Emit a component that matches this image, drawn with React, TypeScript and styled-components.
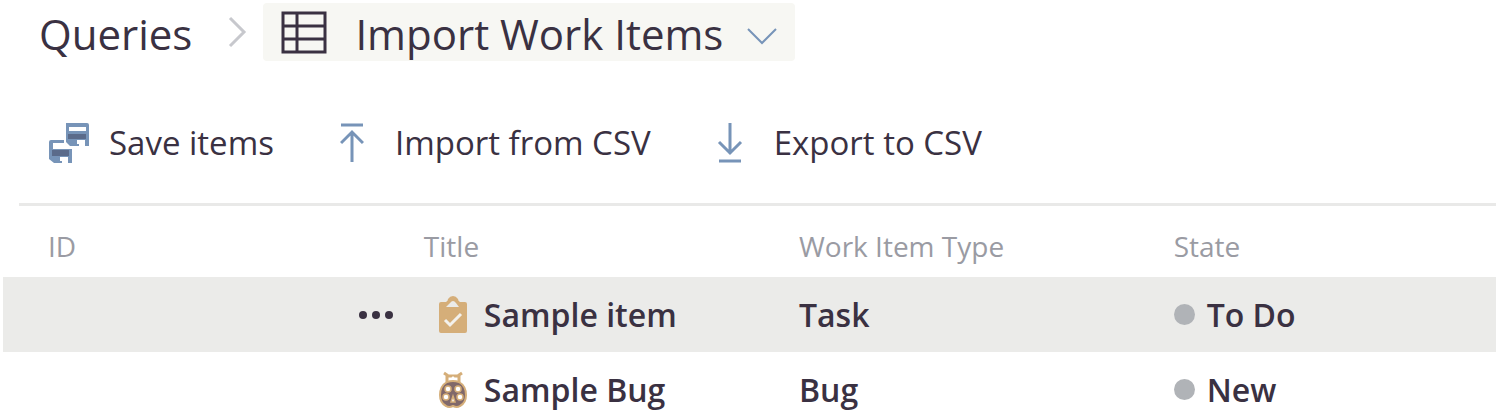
import React from "react";
import styled, { createGlobalStyle } from "styled-components";

const INK = "#3a3142";
const BLUE = "#7794b8";
const SAND = "#d5ae79";

const GlobalStyle = createGlobalStyle`
  *, *::before, *::after { box-sizing: border-box; }
  body {
    margin: 0;
    overflow: hidden;
    background: #fff;
    color: ${INK};
    font-family: "Open Sans", "Noto Sans", sans-serif;
  }
  svg { display: block; flex: none; }
`;

const Page = styled.main`
  padding: 3px 5px 0 3px;
`;

const Breadcrumb = styled.nav`
  display: flex;
  align-items: center;
  height: 58px;
  padding-left: 36px;
  font-size: 42px;
  line-height: 58px;
  white-space: nowrap;
`;

const Crumb = styled.a`
  padding-top: 4px;
  color: inherit;
  text-decoration: none;
`;

const CrumbArrow = styled.svg`
  margin: 0 15px 0 36px;
`;

const QueryButton = styled.button`
  display: flex;
  align-items: center;
  height: 58px;
  padding: 0 18px 0 17px;
  border: 0;
  border-radius: 4px;
  background: #f7f7f3;
  color: inherit;
  font: inherit;
  line-height: 58px;
`;

const QueryName = styled.span`
  padding-top: 4px;
  margin: 0 24px 0 28px;
`;

const MenuChevron = styled.svg`
  margin-top: 8px;
`;

const Toolbar = styled.div`
  display: flex;
  align-items: center;
  gap: 66px;
  height: 145px;
  margin-left: 16px;
  padding: 22px 0 0 29px;
  border-bottom: 3px solid #e9e9e8;
`;

const ToolButton = styled.button<{ $gap: number }>`
  display: flex;
  align-items: center;
  gap: ${({ $gap }) => $gap}px;
  padding: 0;
  border: 0;
  background: none;
  color: inherit;
  font: inherit;
  font-size: 33px;
  line-height: 44px;
  white-space: nowrap;
`;

const Table = styled.table`
  width: 100%;
  border-collapse: collapse;
  table-layout: fixed;
  text-align: left;
`;

const Column = styled.col<{ $width: string }>`
  width: ${({ $width }) => $width};
`;

const HeadCell = styled.th<{ $indent?: number }>`
  height: 71px;
  padding: 8px 0 0 ${({ $indent = 45 }) => $indent}px;
  color: #9a9ba3;
  font-size: 28px;
  font-weight: 400;
  line-height: 36px;
`;

const Row = styled.tr<{ $selected?: boolean }>`
  background: ${({ $selected }) => ($selected ? "#ebebe9" : "transparent")};
`;

const Cell = styled.td<{ $indent?: number }>`
  height: 75px;
  padding: 0 0 0 ${({ $indent = 45 }) => $indent}px;
  font-size: 32px;
  font-weight: 600;
  line-height: 44px;
  white-space: nowrap;
`;

const TitleContent = styled.div`
  display: flex;
  align-items: center;
  gap: 17px;
`;

const MoreSlot = styled.div`
  width: 64px;
`;

const MoreButton = styled.button`
  display: block;
  padding: 8px 0;
  border: 0;
  background: none;
`;

const StateContent = styled.div`
  display: flex;
  align-items: center;
  gap: 12px;
`;

const StateDot = styled.span`
  width: 21px;
  height: 21px;
  border-radius: 50%;
  background: #b0b3b7;
`;

const GridIcon = () => (
  <svg width="47" height="43" viewBox="0 0 47 43" fill="none" stroke={INK} strokeWidth="3" aria-hidden="true">
    <rect x="3" y="2" width="42" height="39" />
    <path d="M3 15H45M3 28H45" />
    <path d="M17 2V41" />
  </svg>
);

const SaveAllIcon = () => (
  <svg width="42" height="42" viewBox="0 0 42 42" aria-hidden="true">
    <path
      fill={BLUE}
      fillRule="evenodd"
      d="M18 1H39Q41 1 41 3V24H37V18H29V24H22L18 20ZM21 5V9H38V5Z"
    />
    <path fill="#5b6b8a" d="M20 12H38V17H20Z" />
    <path fill={BLUE} d="M3 18H16V21H5V27H24V41H20V35H12V41H6L1 37V20Q1 18 3 18Z" />
    <path fill="#5b6b8a" d="M4 28H21V34H4Z" />
    <path fill={BLUE} d="M27 22H31V24H27ZM10 39H14V41H10Z" />
  </svg>
);

const UploadIcon = () => (
  <svg width="24" height="42" viewBox="0 0 24 42" fill="none" stroke={BLUE} strokeWidth="3" aria-hidden="true">
    <path d="M1 3H23M12 40V11M1 21L12 10L23 21" />
  </svg>
);

const DownloadIcon = () => (
  <svg width="26" height="42" viewBox="0 0 26 42" fill="none" stroke={BLUE} strokeWidth="3" aria-hidden="true">
    <path d="M2 39H24M13 1V31M2 20L13 31L24 20" />
  </svg>
);

const TaskIcon = () => (
  <svg width="28" height="38" viewBox="0 0 28 38" aria-hidden="true">
    <path
      fill={SAND}
      fillRule="evenodd"
      d="M2 6H7Q9 5 9 3Q11 0 14 0Q17 0 19 3Q19 5 21 6H26Q28 6 28 8V35Q28 37 26 37H2Q0 37 0 35V8Q0 6 2 6ZM7 11H20L17 7Q14 3 11 7Z"
    />
    <path d="M6 24L11 29L22 18" fill="none" stroke="#f3f1ec" strokeWidth="3" />
  </svg>
);

const BugIcon = () => (
  <svg width="28" height="38" viewBox="0 0 28 38" aria-hidden="true">
    <path d="M5 2L8 4V11M23 2L20 4V11M8 5H20" fill="none" stroke={SAND} strokeWidth="3" />
    <path d="M10 10L14 5L18 10Z" fill="#fff" />
    <path
      d="M8 11Q14 9 20 11Q27 15 27 24Q27 32 21 35Q18 37 14 35Q10 37 7 35Q1 32 1 24Q1 15 8 11Z"
      fill="#80686a"
      stroke={SAND}
      strokeWidth="2"
    />
    <g fill="#fff" stroke={SAND} strokeWidth="1.5">
      <circle cx="9" cy="18" r="3" />
      <circle cx="19" cy="18" r="3" />
      <circle cx="7" cy="26" r="3" />
      <circle cx="21" cy="26" r="3" />
      <path d="M14 25L16 31H12Z" />
    </g>
  </svg>
);

const MoreIcon = () => (
  <svg width="36" height="10" viewBox="0 0 36 10" fill={INK} aria-hidden="true">
    <circle cx="5" cy="5" r="4" />
    <circle cx="18" cy="5" r="4" />
    <circle cx="31" cy="5" r="4" />
  </svg>
);

type Item = { title: string; type: "Task" | "Bug"; state: string; selected?: boolean };

const items: Item[] = [
  { title: "Sample item", type: "Task", state: "To Do", selected: true },
  { title: "Sample Bug", type: "Bug", state: "New" },
];

export default function App() {
  return (
    <>
      <GlobalStyle />
      <Page>
        <Breadcrumb aria-label="Breadcrumb">
          <Crumb href="#queries">Queries</Crumb>
          <CrumbArrow width="20" height="32" viewBox="0 0 20 32" fill="none" stroke="#c7c8cd" strokeWidth="3" aria-hidden="true">
            <path d="M2 2L16 16L2 30" />
          </CrumbArrow>
          <QueryButton type="button" aria-haspopup="menu">
            <GridIcon />
            <QueryName>Import Work Items</QueryName>
            <MenuChevron width="30" height="18" viewBox="0 0 30 18" fill="none" stroke={BLUE} strokeWidth="2" aria-hidden="true">
              <path d="M1 2L15 16L29 2" />
            </MenuChevron>
          </QueryButton>
        </Breadcrumb>

        <Toolbar role="toolbar" aria-label="Query actions">
          <ToolButton type="button" $gap={19}>
            <SaveAllIcon />
            Save items
          </ToolButton>
          <ToolButton type="button" $gap={31}>
            <UploadIcon />
            Import from CSV
          </ToolButton>
          <ToolButton type="button" $gap={31}>
            <DownloadIcon />
            Export to CSV
          </ToolButton>
        </Toolbar>

        <Table>
          <colgroup>
            <Column $width="23.5%" />
            <Column $width="26.8%" />
            <Column $width="25.1%" />
            <Column $width="24.6%" />
          </colgroup>
          <thead>
            <tr>
              <HeadCell scope="col">ID</HeadCell>
              <HeadCell scope="col" $indent={70}>Title</HeadCell>
              <HeadCell scope="col">Work Item Type</HeadCell>
              <HeadCell scope="col">State</HeadCell>
            </tr>
          </thead>
          <tbody>
            {items.map((item) => (
              <Row key={item.title} $selected={item.selected}>
                <Cell />
                <Cell $indent={4}>
                  <TitleContent>
                    <MoreSlot>
                      {item.selected && (
                        <MoreButton type="button" aria-label="More actions">
                          <MoreIcon />
                        </MoreButton>
                      )}
                    </MoreSlot>
                    {item.type === "Task" ? <TaskIcon /> : <BugIcon />}
                    {item.title}
                  </TitleContent>
                </Cell>
                <Cell>{item.type}</Cell>
                <Cell>
                  <StateContent>
                    <StateDot />
                    {item.state}
                  </StateContent>
                </Cell>
              </Row>
            ))}
          </tbody>
        </Table>
      </Page>
    </>
  );
}
